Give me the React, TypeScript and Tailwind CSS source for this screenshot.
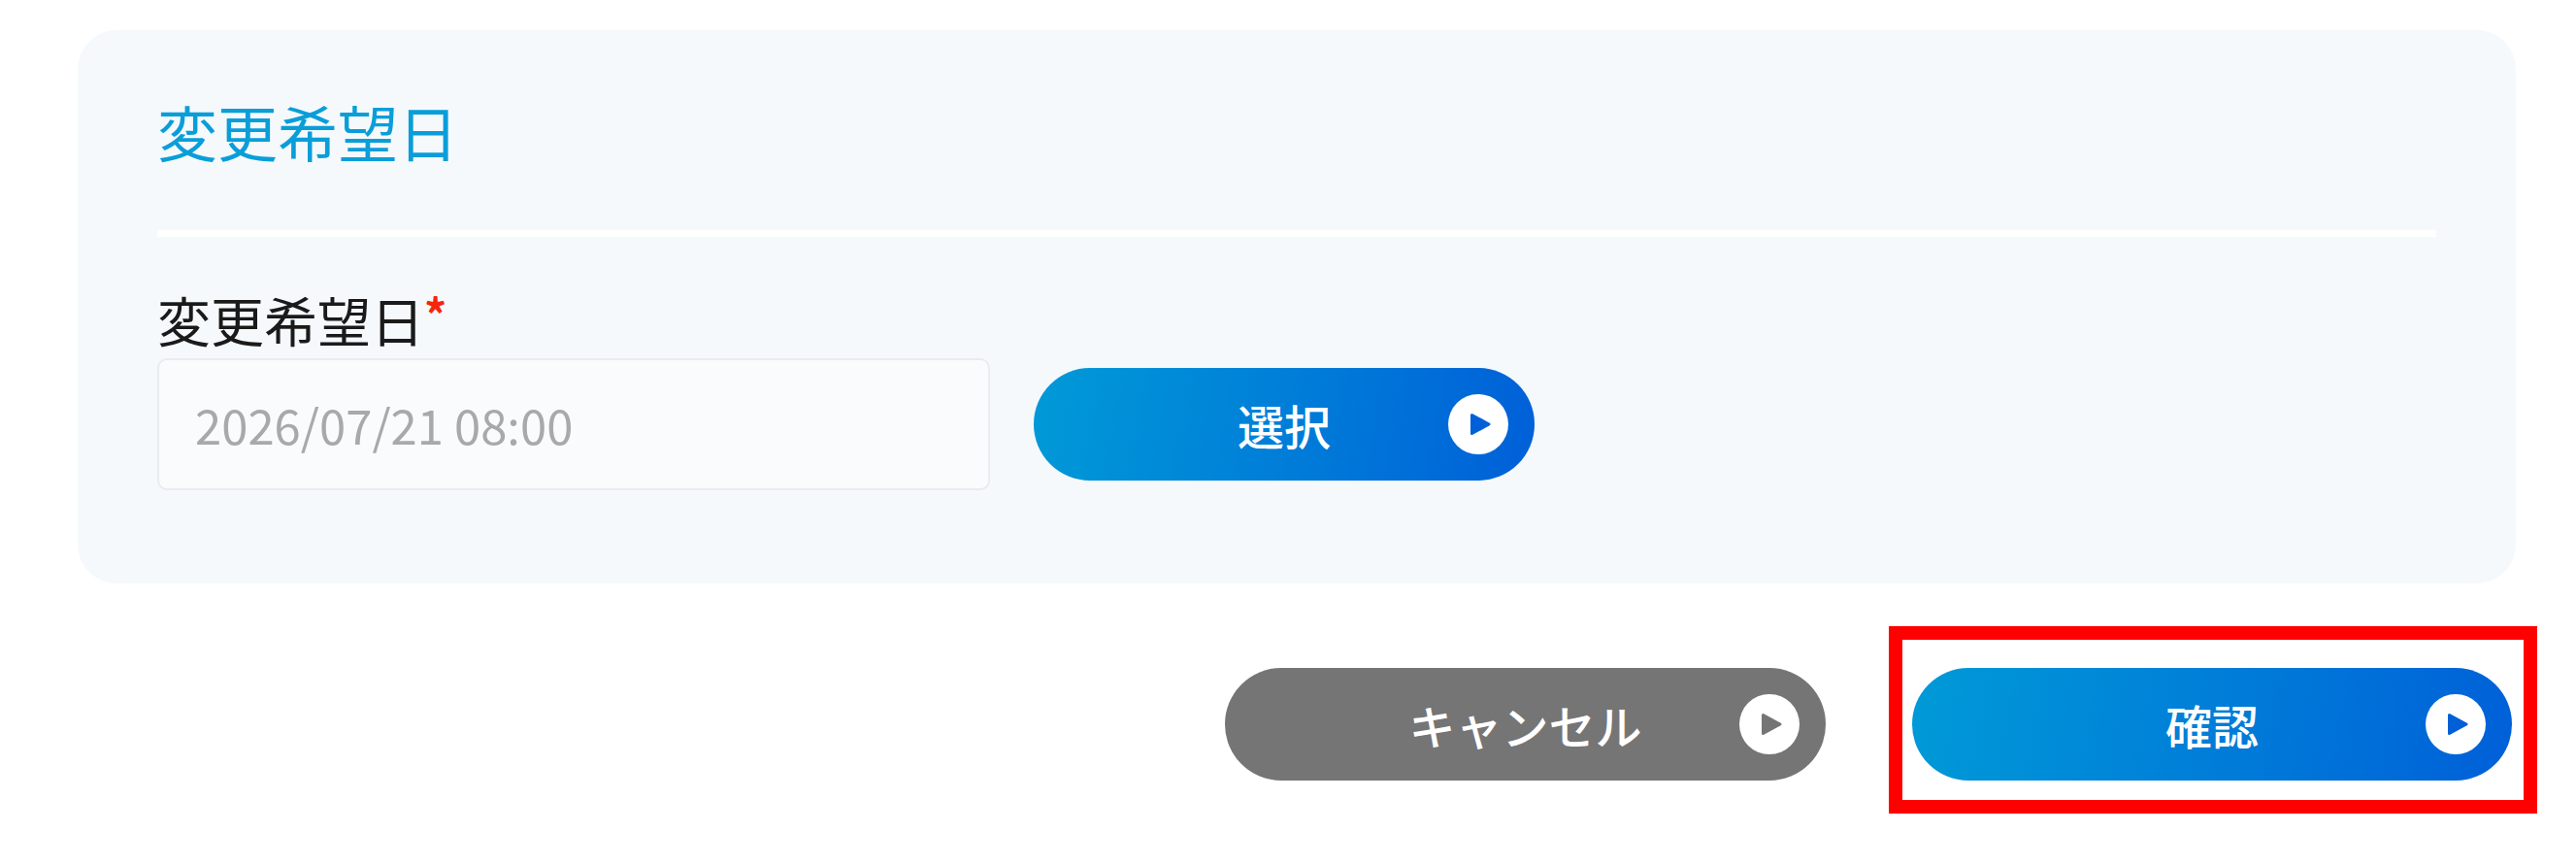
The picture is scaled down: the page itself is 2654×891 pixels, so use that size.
const JP_FONT = "font-['Noto_Sans_CJK_JP','Noto_Sans',sans-serif]";

function PlayBadge({ color }: { color: string }) {
  return (
    <span className="absolute right-[27px] top-1/2 -translate-y-1/2 w-[62px] h-[62px] rounded-full bg-white flex items-center justify-center">
      <svg width="26" height="28" viewBox="0 0 26 28" className="ml-[3px]">
        <path
          d="M4.5 4.5 L22 14 L4.5 23.5 Z"
          fill={color}
          stroke={color}
          strokeWidth="3"
          strokeLinejoin="round"
        />
      </svg>
    </span>
  );
}

function PillButton({
  label,
  width,
  gray,
}: {
  label: string;
  width: string;
  gray?: boolean;
}) {
  const bg = gray
    ? "bg-[#757575]"
    : "bg-linear-100 from-[#009ad7] to-[#005fd8]";

  return (
    <button
      className={`relative ${width} h-[116px] rounded-full ${bg} text-white text-[48px] font-medium flex items-center justify-center shrink-0`}
    >
      <span className="leading-none">{label}</span>
      <PlayBadge color={gray ? "#757575" : "#0060d8"} />
    </button>
  );
}

export default function App() {
  return (
    <div
      className={`relative w-[2654px] h-[891px] bg-white overflow-hidden pl-[80px] pr-[62px] pt-[31px] ${JP_FONT}`}
    >
      {/* PANEL */}
      <div className="h-[570px] rounded-[40px] bg-[#f5f9fc] px-[82px]">
        <h2 className="pt-[68px] pb-[66px] text-[62px] leading-[72px] font-normal text-[#0a9ed9]">
          変更希望日
        </h2>
        <div className="h-[7px] bg-white" />

        <div className="mt-[45px]">
          <label className="block text-[55px] leading-[66px] text-[#1a1a1a] whitespace-nowrap">
            変更希望日
            <span className="text-[#f5260c] text-[46px] font-bold align-[10px]">*</span>
          </label>
          <div className="flex items-center gap-[45px] mt-[8px]">
            <div className="w-[858px] h-[136px] rounded-[10px] border-2 border-[#e9ebef] bg-[#fafbfd] flex items-center pl-[37px] text-[49px] text-[#a9a9a9]">
              2026/07/21 08:00
            </div>
            <PillButton label="選択" width="w-[516px]" />
          </div>
        </div>
      </div>

      {/* FOOTER BUTTONS */}
      <div className="flex justify-end gap-[89px] mt-[87px] pr-[4px]">
        <PillButton label="キャンセル" width="w-[619px]" gray />
        <PillButton label="確認" width="w-[618px]" />
      </div>

      {/* RED ANNOTATION FRAME */}
      <div className="absolute left-[1946px] top-[645px] w-[668px] h-[193px] border-[14px] border-[#ff0000] pointer-events-none" />
    </div>
  );
}
